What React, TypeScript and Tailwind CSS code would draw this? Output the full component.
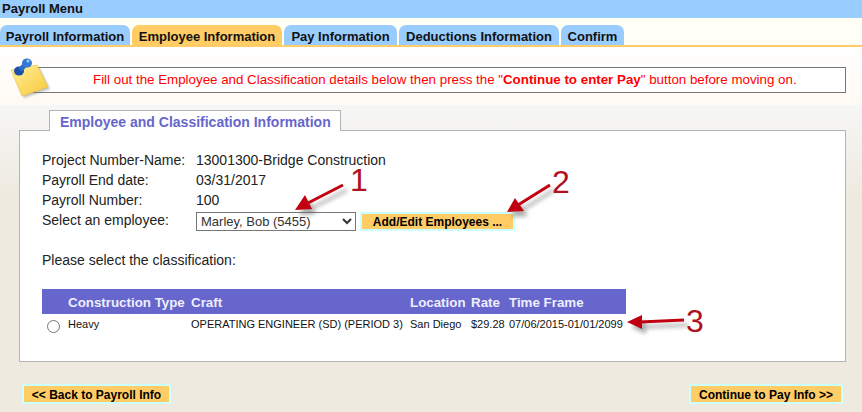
const tabs = [
  { label: 'Payroll Information', width: 'w-[130px]', active: false },
  { label: 'Employee Information', width: 'w-[150px]', active: true },
  { label: 'Pay Information', width: 'w-[113px]', active: false },
  { label: 'Deductions Information', width: 'w-[160px]', active: false },
  { label: 'Confirm', width: 'w-[63px]', active: false },
];

function NoteIcon() {
  return (
    <svg width="44" height="44" viewBox="0 0 44 44" className="absolute left-[10px] top-[9px]">
      <defs>
        <linearGradient id="note" x1="0" y1="0" x2="1" y2="1">
          <stop offset="0" stopColor="#fff09a" />
          <stop offset="1" stopColor="#f8c838" />
        </linearGradient>
        <filter id="noteShadow" x="-20%" y="-20%" width="140%" height="140%">
          <feGaussianBlur stdDeviation="1" />
        </filter>
      </defs>
      <polygon points="3,16 29,11 40,33 14,42" fill="#777" opacity="0.45" filter="url(#noteShadow)" />
      <polygon points="1,14 27,9 38,31 12,40" fill="url(#note)" stroke="#e8b830" strokeWidth="0.5" />
      <ellipse cx="9" cy="15" rx="5" ry="4.5" fill="#1b4fa8" />
      <path d="M10 14 L17 7" stroke="#2a6ccc" strokeWidth="5" />
      <ellipse cx="17" cy="7" rx="5" ry="4.5" fill="#3579d6" />
      <circle cx="18" cy="5" r="1.5" fill="#a4ccf6" />
    </svg>
  );
}

function Arrows() {
  return (
    <svg width="862" height="412" className="absolute left-0 top-0 pointer-events-none">
      <defs>
        <filter id="arrowShadow" x="-30%" y="-60%" width="160%" height="220%">
          <feGaussianBlur stdDeviation="2" />
        </filter>
        <g id="arrow1">
          <path d="M343 185 L308 203" strokeWidth="3" fill="none" />
          <polygon points="295,210 305,195 312,209" stroke="none" />
        </g>
        <g id="arrow2">
          <path d="M550 185 L518 205" strokeWidth="3" fill="none" />
          <polygon points="507,212 515,198 524,211" stroke="none" />
        </g>
        <g id="arrow3">
          <path d="M684 320 L640 322" strokeWidth="3" fill="none" />
          <polygon points="627,322 642,315 642,329" stroke="none" />
        </g>
      </defs>
      <g transform="translate(4 5)" stroke="#666" fill="#666" opacity="0.55" filter="url(#arrowShadow)">
        <use href="#arrow1" />
        <use href="#arrow2" />
        <use href="#arrow3" />
      </g>
      <g stroke="#c00010" fill="#c00010">
        <use href="#arrow1" />
        <use href="#arrow2" />
        <use href="#arrow3" />
      </g>
    </svg>
  );
}

function ActionButton({ children, className = '' }: { children: React.ReactNode; className?: string }) {
  return (
    <button className={`border-2 border-[#ccffff] bg-[#ffcc66] pt-px text-[12px] font-bold leading-none text-black ${className}`}>
      {children}
    </button>
  );
}

export default function App() {
  return (
    <div className="relative h-[412px] w-[862px] overflow-hidden bg-white font-['Liberation_Sans',Arial,sans-serif] text-[14px] text-[#222]">
      {/* Title bar */}
      <div className="h-[18px] bg-[#99ccff] pl-[2px] text-[13px] font-bold leading-[17px] text-[#111]">Payroll Menu</div>

      {/* Tabs */}
      <div className="flex h-[29px] items-end gap-[2px] border-b-2 border-[#ffcc66] bg-[#fffff5]">
        {tabs.map((tab) => (
          <div
            key={tab.label}
            className={`flex h-[20px] items-center justify-center rounded-t-[7px] pt-[3px] text-[13px] font-bold text-[#111] ${tab.width} ${tab.active ? 'bg-[#ffcc66]' : 'bg-[#99ccff]'}`}
          >
            {tab.label}
          </div>
        ))}
      </div>

      {/* Message */}
      <div className="relative h-[58px] bg-gradient-to-b from-white to-[#fffaf3] pl-[33px] pr-[16px] pt-[20px]">
        <div className="flex h-[26px] items-center border border-l-0 border-[#777] bg-white pl-[60px] text-[13.33px] text-[#ff0000]">
          <span>
            Fill out the Employee and Classification details below then press the "<b>Continue to enter Pay</b>" button before moving on.
          </span>
        </div>
        <NoteIcon />
      </div>

      {/* Main area */}
      <div className="h-[307px] bg-gradient-to-b from-[#f6f6f6] to-[#eeeadf] to-[30%] pl-[19px] pr-[19px] pt-[5px]">
        <div className="relative z-10 -mb-px ml-[30px] flex h-[21px] w-[292px] items-center border border-b-0 border-[#b4b4b4] bg-white pl-[10px] pt-[2px] text-[14px] font-bold text-[#6666cc]">
          Employee and Classification Information
        </div>
        <div className="h-[232px] w-[827px] border border-[#b4b4b4] bg-white pl-[22px] pt-[19px]">
          <div className="grid grid-cols-[154px_1fr] text-[14px] leading-[20px]">
            <div>Project Number-Name:</div>
            <div>13001300-Bridge Construction</div>
            <div>Payroll End date:</div>
            <div>03/31/2017</div>
            <div>Payroll Number:</div>
            <div>100</div>
            <div>Select an employee:</div>
            <div className="mt-[2px] flex h-[19px] items-stretch gap-[4px]">
              <select className="w-[160px] border border-[#777] bg-white text-[13px] text-[#333]">
                <option>Marley, Bob (5455)</option>
              </select>
              <ActionButton className="w-[155px]">Add/Edit Employees ...</ActionButton>
            </div>
          </div>

          <div className="mt-[19px] leading-[20px]">Please select the classification:</div>

          <div className="mt-[19px] w-[584px]">
            <div className="grid h-[25px] grid-cols-[26px_123px_219px_61px_38px_117px] items-center bg-[#6666cc] pt-[2px] text-[13.33px] font-bold text-[#eeeeff]">
              <div />
              <div>Construction Type</div>
              <div>Craft</div>
              <div>Location</div>
              <div>Rate</div>
              <div>Time Frame</div>
            </div>
            <div className="grid grid-cols-[26px_123px_219px_61px_38px_117px] pt-[4px] text-[11px] leading-[13px] text-[#111]">
              <div>
                <input type="radio" className="ml-[5px] mt-[2px] size-[13px]" />
              </div>
              <div>Heavy</div>
              <div>OPERATING ENGINEER (SD) (PERIOD 3)</div>
              <div>San Diego</div>
              <div>$29.28</div>
              <div>07/06/2015-01/01/2099</div>
            </div>
          </div>
        </div>

        <div className="mt-[22px] flex h-[20px] items-stretch justify-between pl-[3px]">
          <ActionButton className="w-[149px]">&lt;&lt; Back to Payroll Info</ActionButton>
          <ActionButton className="w-[154px]">Continue to Pay Info &gt;&gt;</ActionButton>
        </div>
      </div>

      {/* Annotations */}
      <Arrows />
      <span className="absolute left-[350px] top-[170px] text-[32px] leading-[20px] text-[#b01020]">1</span>
      <span className="absolute left-[552px] top-[172px] text-[32px] leading-[20px] text-[#b01020]">2</span>
      <span className="absolute left-[686px] top-[311px] text-[32px] leading-[20px] text-[#b01020]">3</span>
    </div>
  );
}
